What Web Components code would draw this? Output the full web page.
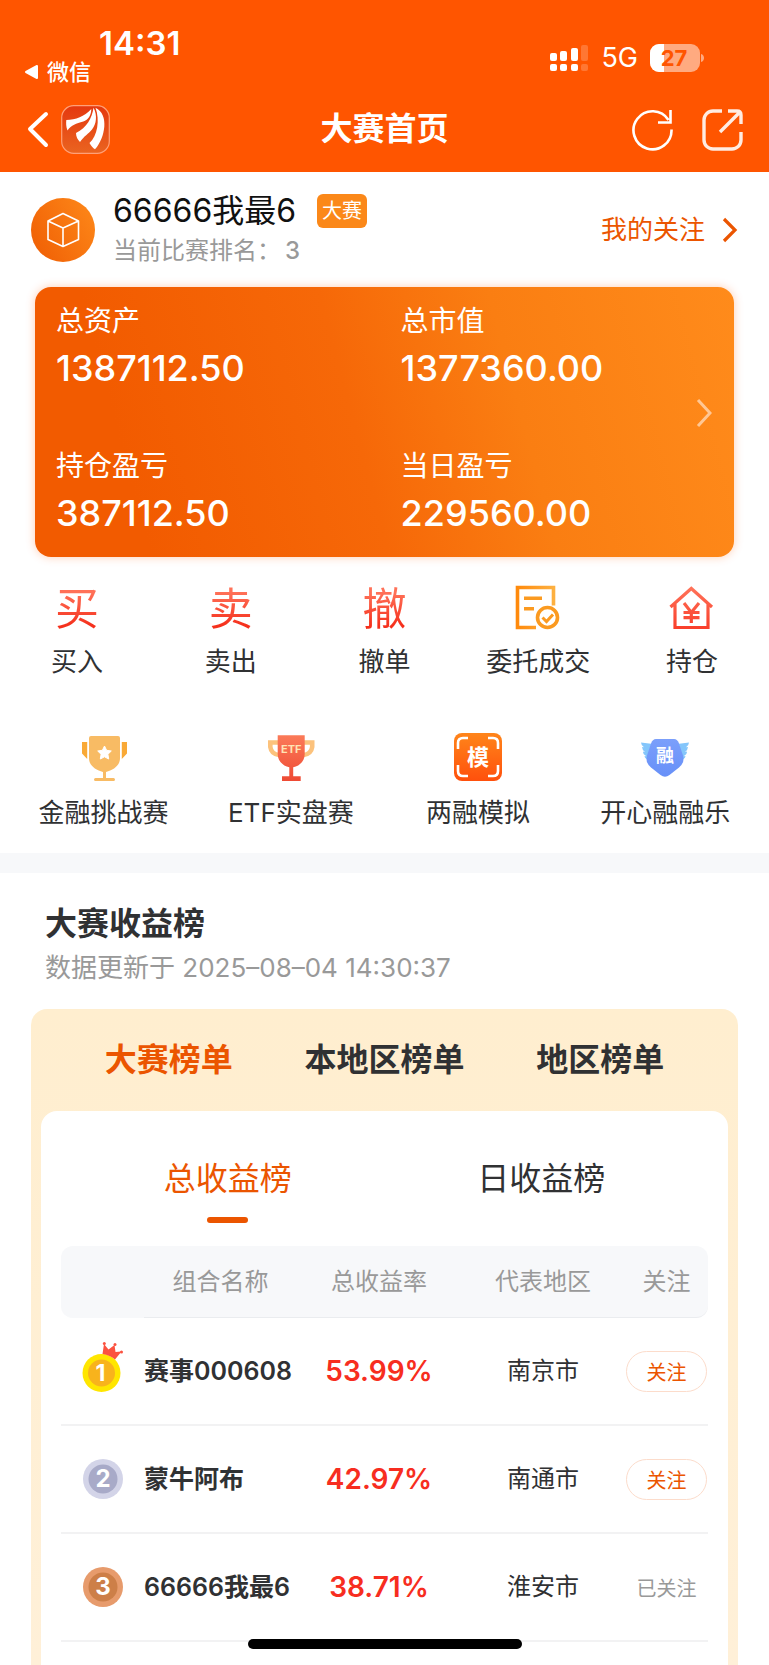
<!DOCTYPE html>
<html lang="zh-CN">
<head>
<meta charset="utf-8">
<meta name="viewport" content="width=device-width, initial-scale=1">
<title>大赛首页</title>
<style>
    :root {
        --brand: #ff5500;
        --accent: #eb5500;
        --ink: #303133;
        --muted: #999999;
        --soft: #f7f8fa;
    }
    body {
        margin: 0;
        min-height: 100vh;
        display: flex;
        flex-direction: column;
        background: #fff;
        color: var(--ink);
        font-family: Inter, "Noto Sans CJK SC", sans-serif;
    }
    .entries {
        display: grid;
        grid-auto-flow: column;
        grid-auto-columns: 1fr;
        padding-top: 28px;
    }
    .entries.games {
        --entry-gap: 15px;
        padding: 54px 10px 23px;
        border-bottom: 20px solid var(--soft);
    }
</style>
</head>
<body>

<status-bar></status-bar>
<nav-bar>大赛首页</nav-bar>

<user-info rank="3">66666我最6<span slot="badge">大赛</span></user-info>

<asset-card>
    <asset-item label="总资产">1387112.50</asset-item>
    <asset-item label="总市值">1377360.00</asset-item>
    <asset-item label="持仓盈亏">387112.50</asset-item>
    <asset-item label="当日盈亏">229560.00</asset-item>
</asset-card>

<div class="entries">
    <icon-entry glyph="买">买入</icon-entry>
    <icon-entry glyph="卖">卖出</icon-entry>
    <icon-entry glyph="撤">撤单</icon-entry>
    <icon-entry icon="order">委托成交</icon-entry>
    <icon-entry icon="house">持仓</icon-entry>
</div>
<div class="entries games">
    <icon-entry icon="trophy">金融挑战赛</icon-entry>
    <icon-entry icon="etf">ETF实盘赛</icon-entry>
    <icon-entry icon="model">两融模拟</icon-entry>
    <icon-entry icon="wings">开心融融乐</icon-entry>
</div>

<board-panel>
    <span slot="title">大赛收益榜</span>
    <span slot="time">数据更新于 2025–08–04 14:30:37</span>
    <rank-table></rank-table>
</board-panel>

<home-indicator></home-indicator>

<script>
class StatusBar extends HTMLElement {
    connectedCallback() {
        this.attachShadow({ mode: 'open' });
        this.shadowRoot.innerHTML = `
            <style>
                :host {
                    display: flex;
                    justify-content: space-between;
                    align-items: flex-start;
                    height: 86px;
                    padding: 0 64px 0 24px;
                    box-sizing: border-box;
                    background: var(--brand);
                    color: #fff;
                }
                .time {
                    margin: 24px 0 0 75px;
                    font-size: 33px;
                    line-height: 38px;
                    font-weight: 600;
                }
                .back {
                    display: flex;
                    align-items: center;
                    gap: 8px;
                    font-size: 22px;
                    line-height: 20px;
                    font-weight: 500;
                    color: inherit;
                    text-decoration: none;
                }
                .right {
                    display: flex;
                    align-items: center;
                    gap: 12px;
                    margin-top: 42px;
                    font-size: 27px;
                    line-height: 32px;
                }
            </style>
            <div>
                <div class="time">14:31</div>
                <a class="back" href="#">
                    <svg width="15" height="16" viewBox="0 0 15 16"><path d="M2 8 13 2v12z" fill="#fff" stroke="#fff" stroke-width="2" stroke-linejoin="round"/></svg>
                    微信
                </a>
            </div>
            <div class="right">
                <svg width="39" height="28" viewBox="0 0 39 28" fill="#fff">
                    <rect x="0" y="9" width="7" height="8" rx="2"/>
                    <rect x="10" y="7" width="7" height="10" rx="2"/>
                    <rect x="21" y="4" width="7" height="13" rx="2"/>
                    <rect x="31" y="1" width="7" height="16" rx="2" opacity=".2"/>
                    <rect x="0" y="20" width="7" height="7" rx="2"/>
                    <rect x="10" y="20" width="7" height="7" rx="2"/>
                    <rect x="21" y="20" width="7" height="7" rx="2"/>
                    <rect x="31" y="20" width="7" height="7" rx="2" opacity=".2"/>
                </svg>
                <span>5G</span>
                <svg width="55" height="28" viewBox="0 0 55 28">
                    <defs><clipPath id="level"><rect width="14" height="28"/></clipPath></defs>
                    <rect width="50" height="28" rx="9" fill="#ffaa80"/>
                    <rect width="50" height="28" rx="9" fill="#fff" clip-path="url(#level)"/>
                    <path d="M51 10c4 1 4 7 0 8z" fill="#ffaa80"/>
                    <text x="24" y="22" font-size="22" font-weight="700" text-anchor="middle" fill="#ff5500">27</text>
                </svg>
            </div>
        `;
    }
}

class NavBar extends HTMLElement {
    connectedCallback() {
        this.attachShadow({ mode: 'open' });
        this.shadowRoot.innerHTML = `
            <style>
                :host {
                    display: grid;
                    grid-template-columns: 1fr auto 1fr;
                    align-items: center;
                    height: 86px;
                    padding: 0 25px;
                    background: var(--brand);
                    color: #fff;
                }
                h1 {
                    margin: 0;
                    font-size: 32px;
                    line-height: 44px;
                    font-weight: 700;
                }
                div {
                    display: flex;
                    align-items: center;
                    gap: 11px;
                }
                .tools {
                    justify-content: flex-end;
                    gap: 27px;
                }
                button {
                    display: flex;
                    padding: 0;
                    border: 0;
                    background: none;
                    cursor: pointer;
                }
            </style>
            <div>
                <button aria-label="返回">
                    <svg width="25" height="38" viewBox="0 0 25 38" fill="none" stroke="#fff" stroke-width="4"><path d="M21 4 5 19l16 16" stroke-linecap="round" stroke-linejoin="round"/></svg>
                </button>
                <svg width="49" height="49" viewBox="0 0 49 49">
                    <defs><linearGradient id="logo" x2="0" y2="1"><stop stop-color="#e4380f"/><stop offset="1" stop-color="#ea6420"/></linearGradient></defs>
                    <rect x=".7" y=".7" width="47.600" height="47.600" rx="12" fill="url(#logo)" stroke="#ffa078" stroke-width="1.200"/>
                    <path fill="#fff" d="M5.300 15C15 14.500 23 12 30.300 4c0 6-3 11-8 12.500C15 18.500 10.500 20 6.500 25.500 5 22 5 18 5.300 15z"/>
                    <path fill="#fff" d="M32.500 2.700C31 13 26 22.500 15 28c0 3.500 1.500 6.500 4 9 4-6 8.500-8 12-12.500C35.500 19 36.500 10 32.500 2.700z"/>
                    <path fill="#fff" d="M34.500 2.700c7 3.500 9.500 10.500 8.800 19C42.500 30 39.500 38 34 44.300c-2-1.300-4-3.300-5.500-6.300C36.500 31 39 15 34.500 2.700z"/>
                </svg>
            </div>
            <h1><slot></slot></h1>
            <div class="tools">
                <button aria-label="刷新">
                    <svg width="43" height="43" viewBox="0 0 43 43" fill="none" stroke="#fff" stroke-width="2.600"><path d="M40.500 21.500A19 19 0 1 1 37.500 12M27 14.500h12.500V2"/></svg>
                </button>
                <button aria-label="分享">
                    <svg width="43" height="43" viewBox="0 0 43 43" fill="none" stroke="#ffece2" stroke-width="3.400"><path d="M21 3H12a9 9 0 0 0-9 9v20a9 9 0 0 0 9 9h19a9 9 0 0 0 9-9v-8M27 3h9q4 0 4 4v9M38 5 19 24"/></svg>
                </button>
            </div>
        `;
    }
}

class UserInfo extends HTMLElement {
    connectedCallback() {
        this.attachShadow({ mode: 'open' });
        this.shadowRoot.innerHTML = `
            <style>
                :host {
                    display: flex;
                    align-items: center;
                    gap: 18px;
                    height: 115px;
                    padding: 0 31px;
                }
                .who {
                    flex: 1;
                    padding-top: 2px;
                    line-height: 40px;
                }
                .name {
                    display: flex;
                    align-items: center;
                    gap: 21px;
                    color: #111;
                    font-size: 32px;
                }
                .badge {
                    padding: 0 5px;
                    border-radius: 6px;
                    background: #fb8819;
                    color: #fff;
                    font-size: 20px;
                    line-height: 34px;
                }
                .rank {
                    display: flex;
                    gap: 4px;
                    color: var(--muted);
                    font-size: 24px;
                }
                b {
                    font-weight: 500;
                }
                a {
                    display: flex;
                    align-items: center;
                    gap: 17px;
                    color: var(--accent);
                    font-size: 26px;
                    line-height: 36px;
                    text-decoration: none;
                }
            </style>
            <svg width="64" height="64" viewBox="0 0 64 64">
                <defs><linearGradient id="face" x1="0" y1=".8" x2="1" y2=".2"><stop stop-color="#f06005"/><stop offset="1" stop-color="#fd8618"/></linearGradient></defs>
                <circle cx="32" cy="32" r="32" fill="url(#face)"/>
                <path d="M32 15.500 47.500 23v18.500L32 48.500 17 41.500V23zM17 23l15 7 15.500-7M32 30v18.500" fill="none" stroke="#fff" stroke-width="1.600" stroke-linejoin="round"/>
            </svg>
            <div class="who">
                <div class="name"><span><slot></slot></span><span class="badge"><slot name="badge"></slot></span></div>
                <div class="rank">当前比赛排名：<b>${this.getAttribute('rank')}</b></div>
            </div>
            <a href="#">我的关注
                <svg width="16" height="26" viewBox="0 0 16 26" fill="none" stroke="#eb5500" stroke-width="3.200"><path d="M2 2l11 11L2 24"/></svg>
            </a>
        `;
    }
}

class AssetCard extends HTMLElement {
    connectedCallback() {
        this.attachShadow({ mode: 'open' });
        this.shadowRoot.innerHTML = `
            <style>
                :host {
                    display: flex;
                    align-items: center;
                    margin: 0 35px;
                    padding: 18px 22px 21px 21px;
                    border-radius: 16px;
                    background: linear-gradient(75deg, #f25b00 15%, #f66808 46%, #fa7e12 68%, #ff8b1b);
                    box-shadow: 0 0 10px rgba(255, 90, 0, 0.3);
                    color: #fff;
                }
                .grid {
                    flex: 1;
                    display: grid;
                    grid-template-columns: 7fr 6fr;
                    row-gap: 59px;
                }
                svg {
                    margin-bottom: 16px;
                }
            </style>
            <div class="grid"><slot></slot></div>
            <svg width="16" height="30" viewBox="0 0 16 30" fill="none" stroke="#ffc794" stroke-width="3"><path d="M2 2l12 13L2 28"/></svg>
        `;
    }
}

class AssetItem extends HTMLElement {
    connectedCallback() {
        this.attachShadow({ mode: 'open' });
        this.shadowRoot.innerHTML = `
            <style>
                :host {
                    display: flex;
                    flex-direction: column;
                    gap: 8px;
                }
                .label {
                    font-size: 28px;
                    line-height: 32px;
                }
                .value {
                    font-size: 36px;
                    line-height: 46px;
                    font-weight: 500;
                }
            </style>
            <span class="label">${this.getAttribute('label')}</span>
            <span class="value"><slot></slot></span>
        `;
    }
}

const icons = {
    order: `
        <defs><linearGradient id="g" x1="0" x2="1" y2="0"><stop stop-color="#ff8a0c"/><stop offset="1" stop-color="#fdb040"/></linearGradient></defs>
        <g fill="none" stroke="url(#g)" stroke-width="3.600">
            <path d="M22 42.500H3.500V2.500h36v18"/>
            <path d="M10 11.500h18v3.500H10zM10 22h10v3.500H10z" stroke="none" fill="#fb9a20"/>
            <circle cx="33.500" cy="32.500" r="10" stroke="#fb9a20"/>
            <path d="M28.500 32.500l4 4 6.500-7" stroke="#fb9a20" stroke-width="3"/>
        </g>`,
    house: `
        <defs><linearGradient id="g" x2="0" y2="1"><stop stop-color="#ff7158"/><stop offset="1" stop-color="#f9402c"/></linearGradient></defs>
        <path d="M2.500 22 23.300 3.500 44 22M7 18v24.500h33V18M16 18l7.300 9.500L31 18M15.500 27.500h16M15.500 32.700h16M23.300 27.500v10.500" fill="none" stroke="url(#g)" stroke-width="3.200"/>`,
    trophy: `
        <path d="M2 9h5.200v17L2 20.500zM41.800 9H47v11.500L41.800 26z" fill="#f9a936"/>
        <path d="M11 3h27q2 0 2 2v20c0 8-7 12-14 14v6h7.500a1.500 1.500 0 0 1 0 3h-18a1.500 1.500 0 0 1 0-3H23v-6C16 37 9 33 9 25V5q0-2 2-2z" fill="#f8bb64"/>
        <path d="M24.500 13l2.100 4.300 4.700.7-3.400 3.300.8 4.700-4.200-2.200-4.200 2.200.8-4.700-3.400-3.300 4.700-.7z" fill="#fff" stroke="#fff" stroke-linejoin="round"/>`,
    etf: `
        <defs>
            <linearGradient id="g" x2="0" y2="1"><stop stop-color="#fb7a58"/><stop offset="1" stop-color="#ee4a34"/></linearGradient>
        </defs>
        <path d="M12 9.500H3.300v4.500q1 7 8.700 8M36.500 9.500h8.700v4.500q-1 7-8.700 8" fill="none" stroke="#fcc27c" stroke-width="4.600"/>
        <path d="M10.700 2.300h27V21c0 7-5 12-11.500 13.300v9h7.500V48H15v-4.700h7.300v-9C16 33 10.700 28 10.700 21z" fill="url(#g)"/>
        <text x="24.200" y="20" font-size="11" font-weight="700" text-anchor="middle" fill="#ffe3b4">ETF</text>`,
    model: `
        <defs><linearGradient id="g" x2="0" y2="1"><stop stop-color="#ff851a"/><stop offset="1" stop-color="#ff500c"/></linearGradient></defs>
        <rect width="48" height="48" rx="8" fill="url(#g)"/>
        <path d="M4 16v-6q0-5 5-5h5M34 5h5q5 0 5 5v6M44 32v6q0 5-5 5h-5M14 43H9q-5 0-5-5v-6" fill="none" stroke="#fff" stroke-width="2.600"/>
        <text x="24" y="32" font-size="22" font-weight="700" text-anchor="middle" fill="#fff">模</text>`,
    wings: `
        <defs><linearGradient id="g" x2="0" y2="1"><stop stop-color="#7b9ffb"/><stop offset="1" stop-color="#6790f8"/></linearGradient></defs>
        <path d="M0 9.500 12 11 8 27q-4-1-4.500-4l2 .3Q2 21.500 2 18.500l2 .5Q1 16.500 1 14l2 .3Q0 12 0 9.500zM48 9.500 36 11l4 16q4-1 4.500-4l-2 .3q3.500-1.800 3.500-4.800l-2 .5q3-2.500 3-5l-2 .3q3-2.300 3-4.800z" fill="#84c6fb"/>
        <path d="M15 6h18q3.500 0 5 4.500l4 12q2 7-4 12l-9.500 7.500q-4.500 3.500-9 0L10 34.500q-6-5-4-12l4-12Q11.500 6 15 6z" fill="url(#g)"/>
        <text x="24" y="29" font-size="18" font-weight="700" text-anchor="middle" fill="#fff">融</text>`
};

class IconEntry extends HTMLElement {
    connectedCallback() {
        const glyph = this.getAttribute('glyph');
        const icon = glyph
            ? `<span class="glyph" aria-hidden="true">${glyph}</span>`
            : `<svg width="48" height="48" viewBox="0 0 48 48">${icons[this.getAttribute('icon')]}</svg>`;

        this.attachShadow({ mode: 'open' });
        this.shadowRoot.innerHTML = `
            <style>
                :host {
                    display: block;
                }
                a {
                    display: flex;
                    flex-direction: column;
                    align-items: center;
                    gap: var(--entry-gap, 12px);
                    color: inherit;
                    font-size: 26px;
                    line-height: 34px;
                    text-decoration: none;
                    white-space: nowrap;
                }
                .glyph {
                    background: linear-gradient(#ff7158 15%, #f5301c 85%);
                    -webkit-background-clip: text;
                    background-clip: text;
                    color: transparent;
                    font-size: 44px;
                    line-height: 48px;
                }
            </style>
            <a href="#">${icon}<span><slot></slot></span></a>
        `;
    }
}

class BoardPanel extends HTMLElement {
    connectedCallback() {
        this.attachShadow({ mode: 'open' });
        this.shadowRoot.innerHTML = `
            <style>
                :host {
                    flex: 1;
                    display: flex;
                    flex-direction: column;
                }
                header {
                    padding: 29px 45px 23px;
                }
                h2 {
                    margin: 0 0 4px;
                    font-size: 32px;
                    line-height: 44px;
                    font-weight: 700;
                }
                p {
                    margin: 0;
                    color: var(--muted);
                    font-size: 26px;
                    line-height: 36px;
                }
                .panel {
                    flex: 1;
                    display: flex;
                    flex-direction: column;
                    margin: 0 31px;
                    padding: 0 10px;
                    border-radius: 16px 16px 0 0;
                    background: linear-gradient(#ffeecf, #fff0d8);
                }
                nav {
                    display: grid;
                    grid-template-columns: repeat(3, 1fr);
                    padding: 0 20px;
                }
                button {
                    padding: 0;
                    border: 0;
                    background: none;
                    color: var(--ink);
                    font-family: inherit;
                    font-size: 32px;
                    line-height: 102px;
                    font-weight: 700;
                    cursor: pointer;
                }
                .sheet {
                    flex: 1;
                    padding: 44px 20px 0;
                    border-radius: 16px 16px 0 0;
                    background: #fff;
                }
                .sheet nav {
                    grid-template-columns: repeat(2, 1fr);
                    padding: 0 10px 23px;
                }
                .sheet button {
                    display: flex;
                    flex-direction: column;
                    align-items: center;
                    gap: 14px;
                    line-height: 48px;
                    font-weight: 400;
                }
                button.active {
                    color: var(--accent);
                }
                .sheet .active::after {
                    content: '';
                    width: 41px;
                    height: 6px;
                    border-radius: 3px;
                    background: var(--accent);
                }
            </style>
            <header>
                <h2><slot name="title"></slot></h2>
                <p><slot name="time"></slot></p>
            </header>
            <div class="panel">
                <nav>
                    <button class="active">大赛榜单</button>
                    <button>本地区榜单</button>
                    <button>地区榜单</button>
                </nav>
                <div class="sheet">
                    <nav>
                        <button class="active">总收益榜</button>
                        <button>日收益榜</button>
                    </nav>
                    <slot></slot>
                </div>
            </div>
        `;

        // Switch the active tab inside its own group
        this.shadowRoot.querySelectorAll('nav').forEach(nav => {
            nav.addEventListener('click', e => {
                const tab = e.target.closest('button');
                if (!tab) return;
                nav.querySelector('.active').classList.remove('active');
                tab.classList.add('active');
            });
        });
    }
}

const medals = [
    `<circle cx="20.500" cy="32" r="19" fill="#ffe600"/>
     <circle cx="20.500" cy="32" r="13.500" fill="#f8b31c"/>
     <path d="M21.500 13 23 3l4.500 5.500 6-4.500 1 7 6-.5-6.500 8Q29 14 21.500 13z" fill="#fb5240"/>
     <g fill="#fb5240"><circle cx="23.300" cy="2.500" r="1.500"/><circle cx="34" cy="3.500" r="1.500"/><circle cx="40.500" cy="11" r="1.500"/></g>
     <text x="19.500" y="40" font-size="23" font-weight="700" text-anchor="middle" fill="#fff">1</text>`,
    `<circle cx="22" cy="30" r="20" fill="#d3d4e8"/>
     <circle cx="22" cy="30" r="14.500" fill="#a8aac8"/>
     <text x="22" y="38" font-size="24" font-weight="700" text-anchor="middle" fill="#fff">2</text>`,
    `<circle cx="22" cy="30" r="20" fill="#e79b6c"/>
     <circle cx="22" cy="30" r="14.500" fill="#cd7f48"/>
     <text x="22" y="38" font-size="24" font-weight="700" text-anchor="middle" fill="#fff">3</text>`
];

const ranks = [
    { name: '赛事000608', rate: '53.99%', city: '南京市', followed: false },
    { name: '蒙牛阿布', rate: '42.97%', city: '南通市', followed: false },
    { name: '66666我最6', rate: '38.71%', city: '淮安市', followed: true }
];

class RankTable extends HTMLElement {
    connectedCallback() {
        const rows = ranks.map((row, i) => `
            <tr>
                <td><svg width="44" height="60" viewBox="0 0 44 60">${medals[i]}</svg></td>
                <td class="name">${row.name}</td>
                <td class="rate">${row.rate}</td>
                <td>${row.city}</td>
                <td><button class="${row.followed ? 'followed' : ''}">${row.followed ? '已关注' : '关注'}</button></td>
            </tr>
        `).join('');

        this.attachShadow({ mode: 'open' });
        this.shadowRoot.innerHTML = `
            <style>
                :host {
                    display: block;
                }
                table {
                    width: 100%;
                    table-layout: fixed;
                    border-collapse: separate;
                    border-spacing: 0;
                    font-size: 24px;
                    line-height: 36px;
                    text-align: center;
                    white-space: nowrap;
                }
                th, td {
                    padding: 0;
                    box-sizing: border-box;
                }
                th {
                    height: 72px;
                    background: var(--soft);
                    border-bottom: 1px solid #eaecef;
                    color: var(--muted);
                    font-weight: 400;
                }
                th:first-child {
                    border-bottom-color: var(--soft);
                    border-radius: 12px 0 0 12px;
                }
                th:last-child {
                    border-radius: 0 12px 12px 0;
                }
                td {
                    height: 108px;
                    border-bottom: 2px solid #f2f2f3;
                }
                .side { width: 83px; }
                .wide { width: 153px; }
                svg {
                    display: block;
                    margin: 0 auto;
                }
                .name {
                    font-size: 25px;
                    font-weight: 600;
                    text-align: left;
                }
                .rate {
                    color: #f72d20;
                    font-size: 28px;
                    font-weight: 600;
                }
                button {
                    width: 81px;
                    height: 41px;
                    padding: 0;
                    border: 1px solid #fcdccb;
                    border-radius: 21px;
                    background: none;
                    color: var(--accent);
                    font-family: inherit;
                    font-size: 20px;
                    vertical-align: middle;
                    cursor: pointer;
                }
                .followed {
                    border-color: transparent;
                    color: var(--muted);
                }
            </style>
            <table>
                <colgroup><col class="side"><col class="wide"><col><col><col class="side"></colgroup>
                <thead>
                    <tr><th></th><th>组合名称</th><th>总收益率</th><th>代表地区</th><th>关注</th></tr>
                </thead>
                <tbody>${rows}</tbody>
            </table>
        `;
    }
}

class HomeIndicator extends HTMLElement {
    connectedCallback() {
        this.attachShadow({ mode: 'open' });
        this.shadowRoot.innerHTML = `
            <style>
                :host {
                    position: fixed;
                    left: 0;
                    right: 0;
                    bottom: 16px;
                    display: flex;
                    justify-content: center;
                    pointer-events: none;
                }
                div {
                    width: 274px;
                    height: 10px;
                    border-radius: 5px;
                    background: #000;
                }
            </style>
            <div></div>
        `;
    }
}

customElements.define('status-bar', StatusBar);
customElements.define('nav-bar', NavBar);
customElements.define('user-info', UserInfo);
customElements.define('asset-card', AssetCard);
customElements.define('asset-item', AssetItem);
customElements.define('icon-entry', IconEntry);
customElements.define('board-panel', BoardPanel);
customElements.define('rank-table', RankTable);
customElements.define('home-indicator', HomeIndicator);
</script>
</body>
</html>
